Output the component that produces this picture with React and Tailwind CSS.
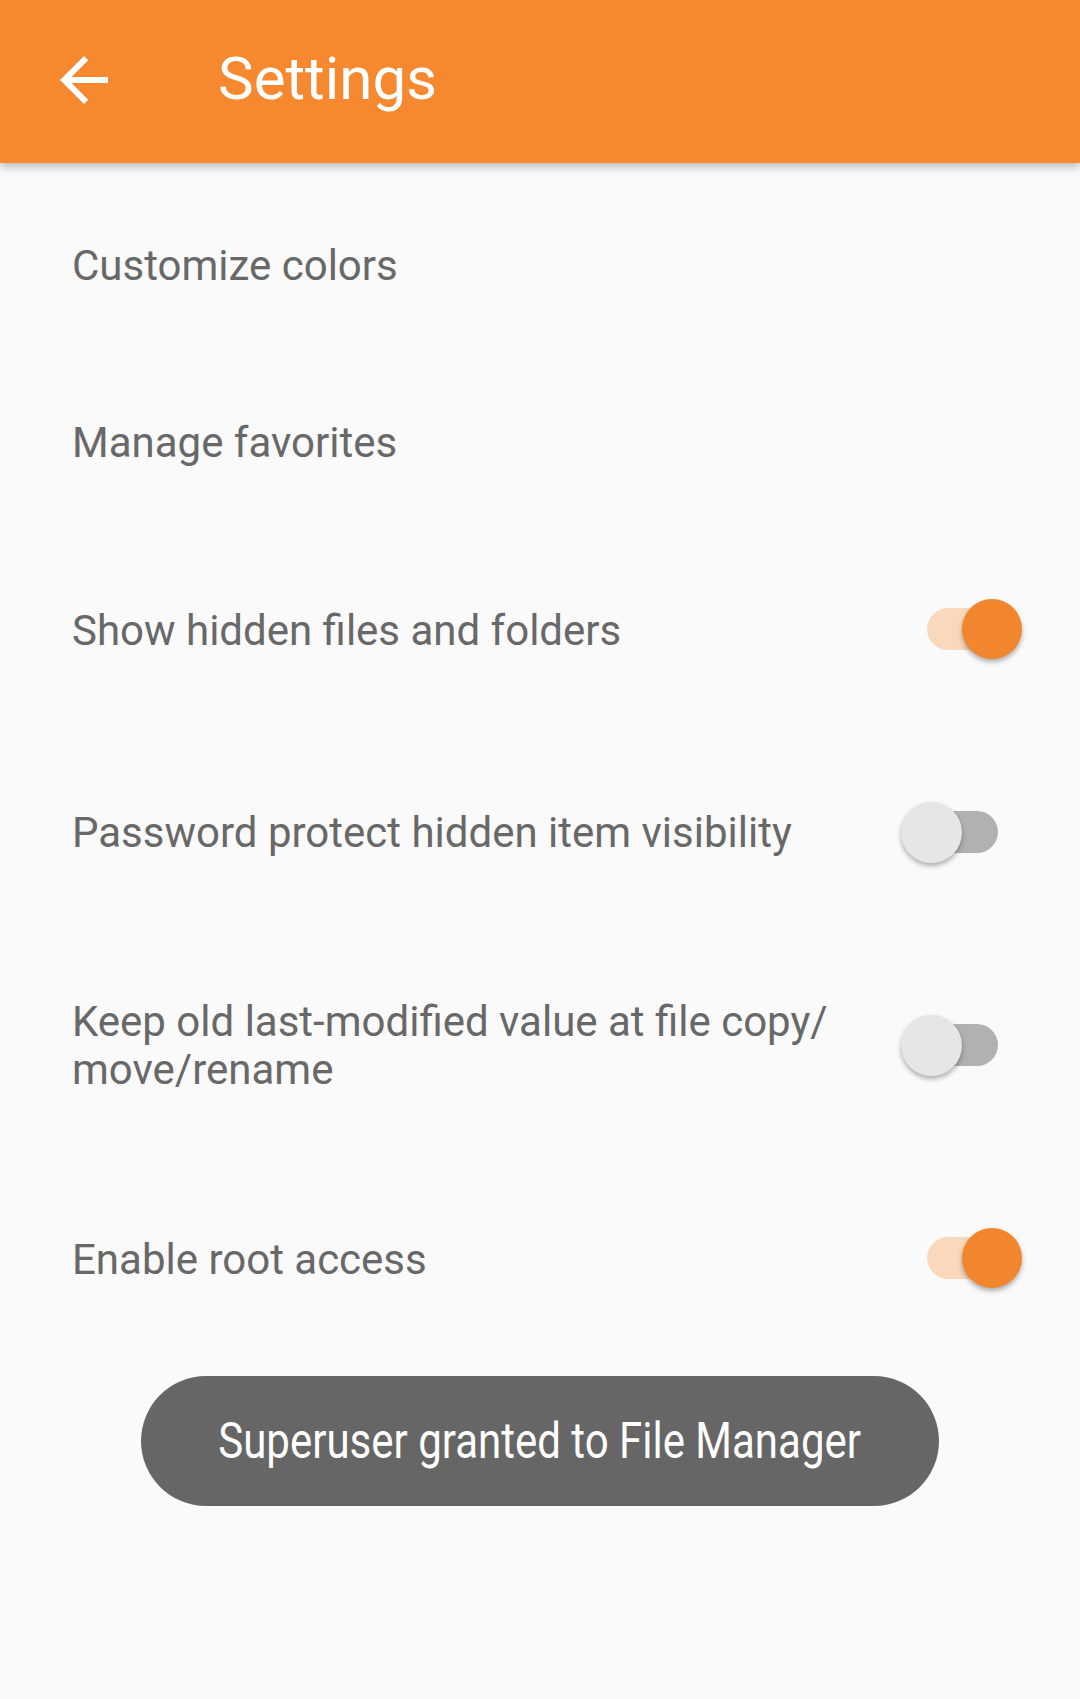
import React from "react";

function Toggle({ on }) {
  if (on) {
    return (
      <div className="flex items-center shrink-0 mb-[4px]">
        <div className="w-[93px] h-[42px] rounded-full bg-[#fad8bc]" />
        <div className="ml-[-58px] w-[60px] h-[60px] rounded-full bg-[#f2862f] shadow-[0_3px_5px_rgba(0,0,0,0.3)]" />
      </div>
    );
  }
  return (
    <div className="flex items-center shrink-0 mb-[2px]">
      <div className="relative z-10 w-[61px] h-[61px] rounded-full bg-[#e6e6e6] shadow-[0_3px_5px_rgba(0,0,0,0.3)]" />
      <div className="ml-[-57px] w-[93px] h-[42px] rounded-full bg-[#b1b1b1]" />
    </div>
  );
}

function Row({ h, children, toggle }) {
  const pr = toggle === false ? "pr-[82px]" : "pr-[58px]";
  return (
    <div className={`flex items-center justify-between pl-[72px] ${pr}`} style={{ height: h }}>
      <div className="text-[42px] leading-[48px] text-[#686868]">{children}</div>
      {toggle !== undefined && <Toggle on={toggle} />}
    </div>
  );
}

export default function App() {
  return (
    <div
      className="w-[1080px] h-[1699px] bg-[#fafafa] overflow-hidden flex flex-col"
      style={{ fontFamily: "Roboto, 'Noto Sans', sans-serif" }}
    >
      <div className="relative z-10 h-[163px] shrink-0 bg-[#f6882f] flex items-center gap-[98px] pl-[48px] shadow-[0_4px_8px_rgba(0,0,0,0.25)]">
        <svg className="mb-[4px]" width="72" height="72" viewBox="0 0 24 24" fill="#ffffff">
          <path d="M20 11H7.83l5.59-5.59L12 4l-8 8 8 8 1.41-1.41L7.83 13H20v-2z" />
        </svg>
        <div className="text-[60px] text-white leading-none mb-[6px]">Settings</div>
      </div>
      <div className="pt-[15px]">
        <Row h={176}>Customize colors</Row>
        <Row h={178}>Manage favorites</Row>
        <Row h={198} toggle={true}>Show hidden files and folders</Row>
        <Row h={206} toggle={false}>Password protect hidden item visibility</Row>
        <Row h={220} toggle={false}>
          Keep old last-modified value at file copy/
          <br />
          move/rename
        </Row>
        <Row h={208} toggle={true}>Enable root access</Row>
      </div>
      <div className="flex justify-center pt-[12px]">
        <div className="w-[798px] h-[130px] rounded-full bg-[#666666] flex items-center justify-center">
          <span className="inline-block text-[50px] text-white leading-none scale-x-[0.84] whitespace-nowrap">
            Superuser granted to File Manager
          </span>
        </div>
      </div>
    </div>
  );
}
